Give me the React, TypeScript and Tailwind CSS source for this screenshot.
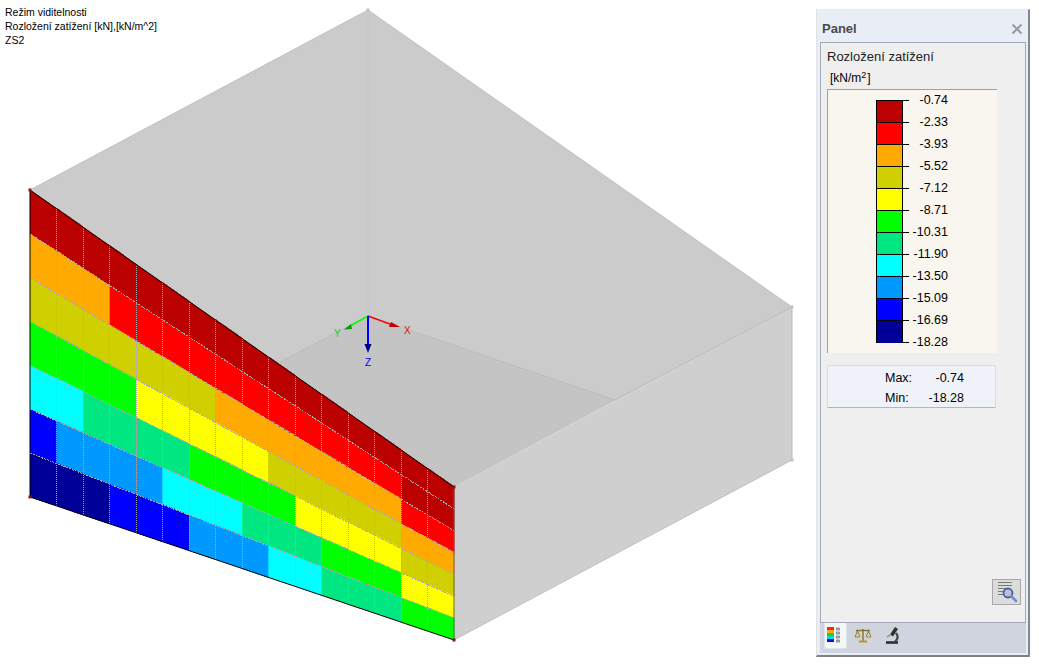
const palette: Record<string, string> = {
  a: '#bb0000',
  r: '#ff0000',
  o: '#ffaa00',
  k: '#d0d000',
  y: '#ffff00',
  g: '#00ff00',
  s: '#00e680',
  c: '#00ffff',
  b: '#0099ff',
  u: '#0000ff',
  n: '#000099',
};

// wall mesh colours, one string per column, top to bottom
const columns = [
  'aokgcun', 'aokgcbn', 'aokgsbn', 'arkgsbu', 'arkysbu', 'arkyscu', 'arkygcb', 'aroygcb',
  'aroygsb', 'arokgsc', 'arokysc', 'arokygs', 'arokygs', 'arokygs', 'aarokyg', 'aarokyg',
];

const legend = [
  { value: '-0.74', color: 'bg-[#bb0000]' },
  { value: '-2.33', color: 'bg-[#ff0000]' },
  { value: '-3.93', color: 'bg-[#ffaa00]' },
  { value: '-5.52', color: 'bg-[#d0d000]' },
  { value: '-7.12', color: 'bg-[#ffff00]' },
  { value: '-8.71', color: 'bg-[#00ff00]' },
  { value: '-10.31', color: 'bg-[#00e680]' },
  { value: '-11.90', color: 'bg-[#00ffff]' },
  { value: '-13.50', color: 'bg-[#0099ff]' },
  { value: '-15.09', color: 'bg-[#0000ff]' },
  { value: '-16.69', color: 'bg-[#000099]' },
  { value: '-18.28', color: '' },
];

const X0 = 30;
const X1 = 454;
const pt = (col: number, row: number) => {
  const x = X0 + ((X1 - X0) * col) / 16;
  const top = 190 + ((487 - 190) * col) / 16;
  const bottom = 497 + ((640 - 497) * col) / 16;
  return [x, top + ((bottom - top) * row) / 7];
};
const poly = (...p: number[][]) => p.map((v) => v.join(',')).join(' ');

function Model() {
  return (
    <svg width="816" height="666" viewBox="0 0 816 666" className="absolute left-0 top-0">
      <polygon points="30,190 368,10 792,307 454,487" fill="#cbcbcb" />
      <polygon points="278,363 368,316 615,400 454,487" fill="#c4c4c4" />
      <polygon points="454,487 792,307 792,460 454,640" fill="#cfcfcf" />
      <g stroke="#bcbcbc" strokeWidth="1" fill="none">
        <line x1="368" y1="10" x2="368" y2="316" strokeDasharray="2 2" />
        <line x1="278" y1="363" x2="368" y2="316" />
        <line x1="368" y1="316" x2="615" y2="400" />
        <line x1="615" y1="400" x2="792" y2="307" />
        <line x1="792" y1="307" x2="792" y2="460" />
        <line x1="30" y1="190" x2="368" y2="10" stroke="#c0c0c0" />
        <line x1="368" y1="10" x2="792" y2="307" stroke="#c0c0c0" />
        <line x1="454" y1="640" x2="792" y2="460" stroke="#c0c0c0" />
      </g>

      <g shapeRendering="crispEdges">
        {columns.map((col, c) =>
          col.split('').map((key, r) => (
            <polygon
              key={`${c}-${r}`}
              points={poly(pt(c, r), pt(c + 1, r), pt(c + 1, r + 1), pt(c, r + 1))}
              fill={palette[key]}
              stroke={palette[key]}
              strokeWidth="0.5"
            />
          )),
        )}
      </g>
      <g stroke="#aca8a8" strokeWidth="1" fill="none" shapeRendering="crispEdges">
        {Array.from({ length: 15 }, (_, i) => i + 1).map((c) => {
          const a = pt(c, 0);
          const b = pt(c, 7);
          const x = Math.floor(a[0]) + 0.5;
          return <line key={c} x1={x} y1={a[1]} x2={x} y2={b[1]} strokeDasharray="1 1" />;
        })}
        {Array.from({ length: 6 }, (_, i) => i + 1).map((r) => {
          const a = pt(0, r);
          const b = pt(16, r);
          return <line key={r} x1={a[0]} y1={a[1]} x2={b[0]} y2={b[1]} strokeDasharray="2 1" />;
        })}
      </g>
      <polyline points="30,497 30,190 454,487" fill="none" stroke="#000" strokeWidth="1" />
      <line x1="30" y1="497" x2="454" y2="640" stroke="#000" strokeWidth="1" />
      <line x1="454" y1="487" x2="454" y2="640" stroke="#6b5a5a" strokeWidth="1" />

      {[[30, 190], [30, 497], [454, 487], [454, 640]].map(([x, y]) => (
        <rect key={`${x}${y}`} x={x - 1.5} y={y - 1.5} width="3" height="3" fill="#8c1414" />
      ))}
      {[[368, 10], [792, 307], [792, 460]].map(([x, y]) => (
        <rect key={`${x}${y}`} x={x - 1.5} y={y - 1.5} width="3" height="3" fill="#c8bcbc" />
      ))}

      {/* axes */}
      <line x1="368" y1="316" x2="394" y2="325.5" stroke="#ff0000" strokeWidth="1.5" />
      <polygon points="391,322 400,327 389,327" fill="#c00000" />
      <line x1="368" y1="316" x2="350" y2="326" stroke="#00ff00" strokeWidth="1.5" />
      <polygon points="346,329.5 344,329.5 351,324 352,329" fill="#00a000" />
      <line x1="368" y1="316" x2="368" y2="345" stroke="#0000ff" strokeWidth="2" />
      <polygon points="364.5,344 371.5,344 368,353" fill="#000090" />
      <text x="404" y="334" fontSize="10" fill="#d01010" fontFamily="'Liberation Sans', sans-serif">X</text>
      <text x="334" y="337" fontSize="10" fill="#10d030" fontFamily="'Liberation Sans', sans-serif">Y</text>
      <text x="365" y="366" fontSize="10" fill="#0000e0" fontFamily="'Liberation Sans', sans-serif">Z</text>
    </svg>
  );
}

function ColorTabIcon() {
  return (
    <svg width="20" height="18" viewBox="0 0 20 18">
      <rect x="1" y="0" width="7" height="3" fill="#ff2020" />
      <rect x="1" y="3" width="7" height="3" fill="#ffaa00" />
      <rect x="1" y="6" width="7" height="3" fill="#20d020" />
      <rect x="1" y="9" width="7" height="3" fill="#00d8f0" />
      <rect x="1" y="12" width="7" height="3" fill="#1010e0" />
      <g fill="#b8bcc0" stroke="#70757a" strokeWidth="0.7">
        <rect x="10.5" y="1" width="3" height="2" />
        <rect x="10.5" y="5" width="3" height="2" />
        <rect x="10.5" y="9" width="3" height="2" />
        <rect x="10.5" y="13" width="3" height="2" />
      </g>
    </svg>
  );
}

function ScalesIcon() {
  return (
    <svg width="18" height="16" viewBox="0 0 18 16">
      <path d="M2 2.5h14M9 1v12" stroke="#8a7420" strokeWidth="1.4" fill="none" />
      <path d="M5 13.5h8" stroke="#b8982a" strokeWidth="2" />
      <path d="M3.5 3 1 9h5zM14.5 3 12 9h5z" fill="none" stroke="#6e6030" strokeWidth="0.8" />
      <path d="M1 9.5h5M12 9.5h5" stroke="#e0b830" strokeWidth="1.6" />
    </svg>
  );
}

function MicroscopeIcon() {
  return (
    <svg width="16" height="17" viewBox="0 0 16 17">
      <path d="M1 15.5h12" stroke="#2e2e2e" strokeWidth="2.6" />
      <path d="M11.5 1 6.5 8.5" stroke="#333" strokeWidth="3.6" />
      <path d="M11 6c2.5 3 2 6.5-1 8.5" stroke="#4a4a4a" strokeWidth="2.4" fill="none" />
      <path d="M2 10 6 7.5" stroke="#9a9a9a" strokeWidth="1.6" />
    </svg>
  );
}

function DetailIcon() {
  return (
    <svg width="22" height="22" viewBox="0 0 22 22">
      <path d="M2 1.5h14M2 4.5h14M2 7.5h8M2 10.5h6M2 13.5h6" stroke="#7a7a7a" strokeWidth="1" />
      <circle cx="12" cy="12" r="4.5" fill="#b8c2d4" stroke="#4a5f9c" strokeWidth="1.8" />
      <path d="M15.5 15.5 20 20" stroke="#6f8fc8" strokeWidth="2.6" strokeLinecap="round" />
    </svg>
  );
}

export default function App() {
  return (
    <div className="flex h-[666px] w-[1039px] overflow-hidden bg-white font-['Liberation_Sans',sans-serif] text-black">
      <div className="relative w-[816px] shrink-0">
        <Model />
        <div className="absolute left-[5px] top-[5px] text-[10.5px] leading-[14px]">
          <div>Režim viditelnosti</div>
          <div>Rozložení zatížení [kN],[kN/m^2]</div>
          <div>ZS2</div>
        </div>
      </div>

      {/* side panel */}
      <aside className="mt-[9px] flex h-[648px] w-[214px] flex-col border-b-2 border-l border-r-2 border-t border-b-[#808080] border-l-[#e2e2e2] border-r-[#808890] border-t-[#e8e8e8] bg-[#e9edf5]">
        <div className="flex h-[32px] shrink-0 items-center justify-between pl-[5px] pr-[4px] pt-[5px]">
          <span className="text-[13px] font-bold text-[#4a4a4a]">Panel</span>
          <svg width="12" height="12" viewBox="0 0 12 12" className="mr-[1px]">
            <path d="M1.5 1.5 10.5 10.5M10.5 1.5 1.5 10.5" stroke="#9a9a9a" strokeWidth="2" />
          </svg>
        </div>

        <div className="ml-[3px] mr-[2px] flex flex-1 flex-col border border-[#a3a9b5] bg-[#efefef] pl-[6px]">
          <div className="mt-[6px] text-[13px] leading-[16px] text-[#222]">Rozložení zatížení</div>
          <div className="ml-[3px] mt-[5px] flex text-[12px] leading-[16px]">
            <span>[kN/m</span>
            <sup className="mt-[5px] text-[9px] leading-none">2</sup>
            <span className="ml-[1px]">]</span>
          </div>

          <div className="mt-[3px] flex h-[264px] w-[170px] border-l border-t border-[#a0a0a0] bg-[#f9f6f0] pl-[48px]">
            <div className="mt-[10px] h-[243px] w-[27px] border border-black">
              {legend.slice(0, 11).map((row, i) => (
                <div key={row.value} className={`h-[22px] border-black ${i < 10 ? 'border-b' : ''} ${row.color}`} />
              ))}
            </div>
            <div className="-mt-px flex flex-col">
              {legend.map((row) => (
                <div key={row.value} className="flex h-[22px] items-center">
                  <div className="h-px w-[6px] bg-black" />
                  <div className="w-[39px] text-right text-[12.5px] leading-none">{row.value}</div>
                </div>
              ))}
            </div>
          </div>

          <div className="mt-[12px] h-[43px] w-[169px] border border-[#d4dcf0] border-b-[#aab2e8] bg-[#eff3f9] pt-[2px] text-[12.5px] leading-[20px]">
            <div className="flex">
              <span className="ml-[57px] w-[40px]">Max:</span>
              <span className="w-[39px] text-right">-0.74</span>
            </div>
            <div className="flex">
              <span className="ml-[57px] w-[40px]">Min:</span>
              <span className="w-[39px] text-right">-18.28</span>
            </div>
          </div>

          <div className="mb-[17px] mr-[4px] mt-auto flex h-[26px] w-[29px] items-center justify-center self-end border border-[#a8a8a8] bg-[#dcdcdc]">
            <DetailIcon />
          </div>
        </div>

        <div className="mb-[2px] ml-[3px] mr-[2px] flex h-[30px] shrink-0 items-start bg-[#cfd4de] pl-[4px]">
          <div className="flex h-[26px] w-[23px] items-center justify-center rounded-b-[3px] border-x border-b border-[#dfe4ea] bg-[#f4f6f8] pl-[1px]">
            <ColorTabIcon />
          </div>
          <div className="ml-[7px] mt-[5px]">
            <ScalesIcon />
          </div>
          <div className="ml-[13px] mt-[4px]">
            <MicroscopeIcon />
          </div>
        </div>
      </aside>
    </div>
  );
}
